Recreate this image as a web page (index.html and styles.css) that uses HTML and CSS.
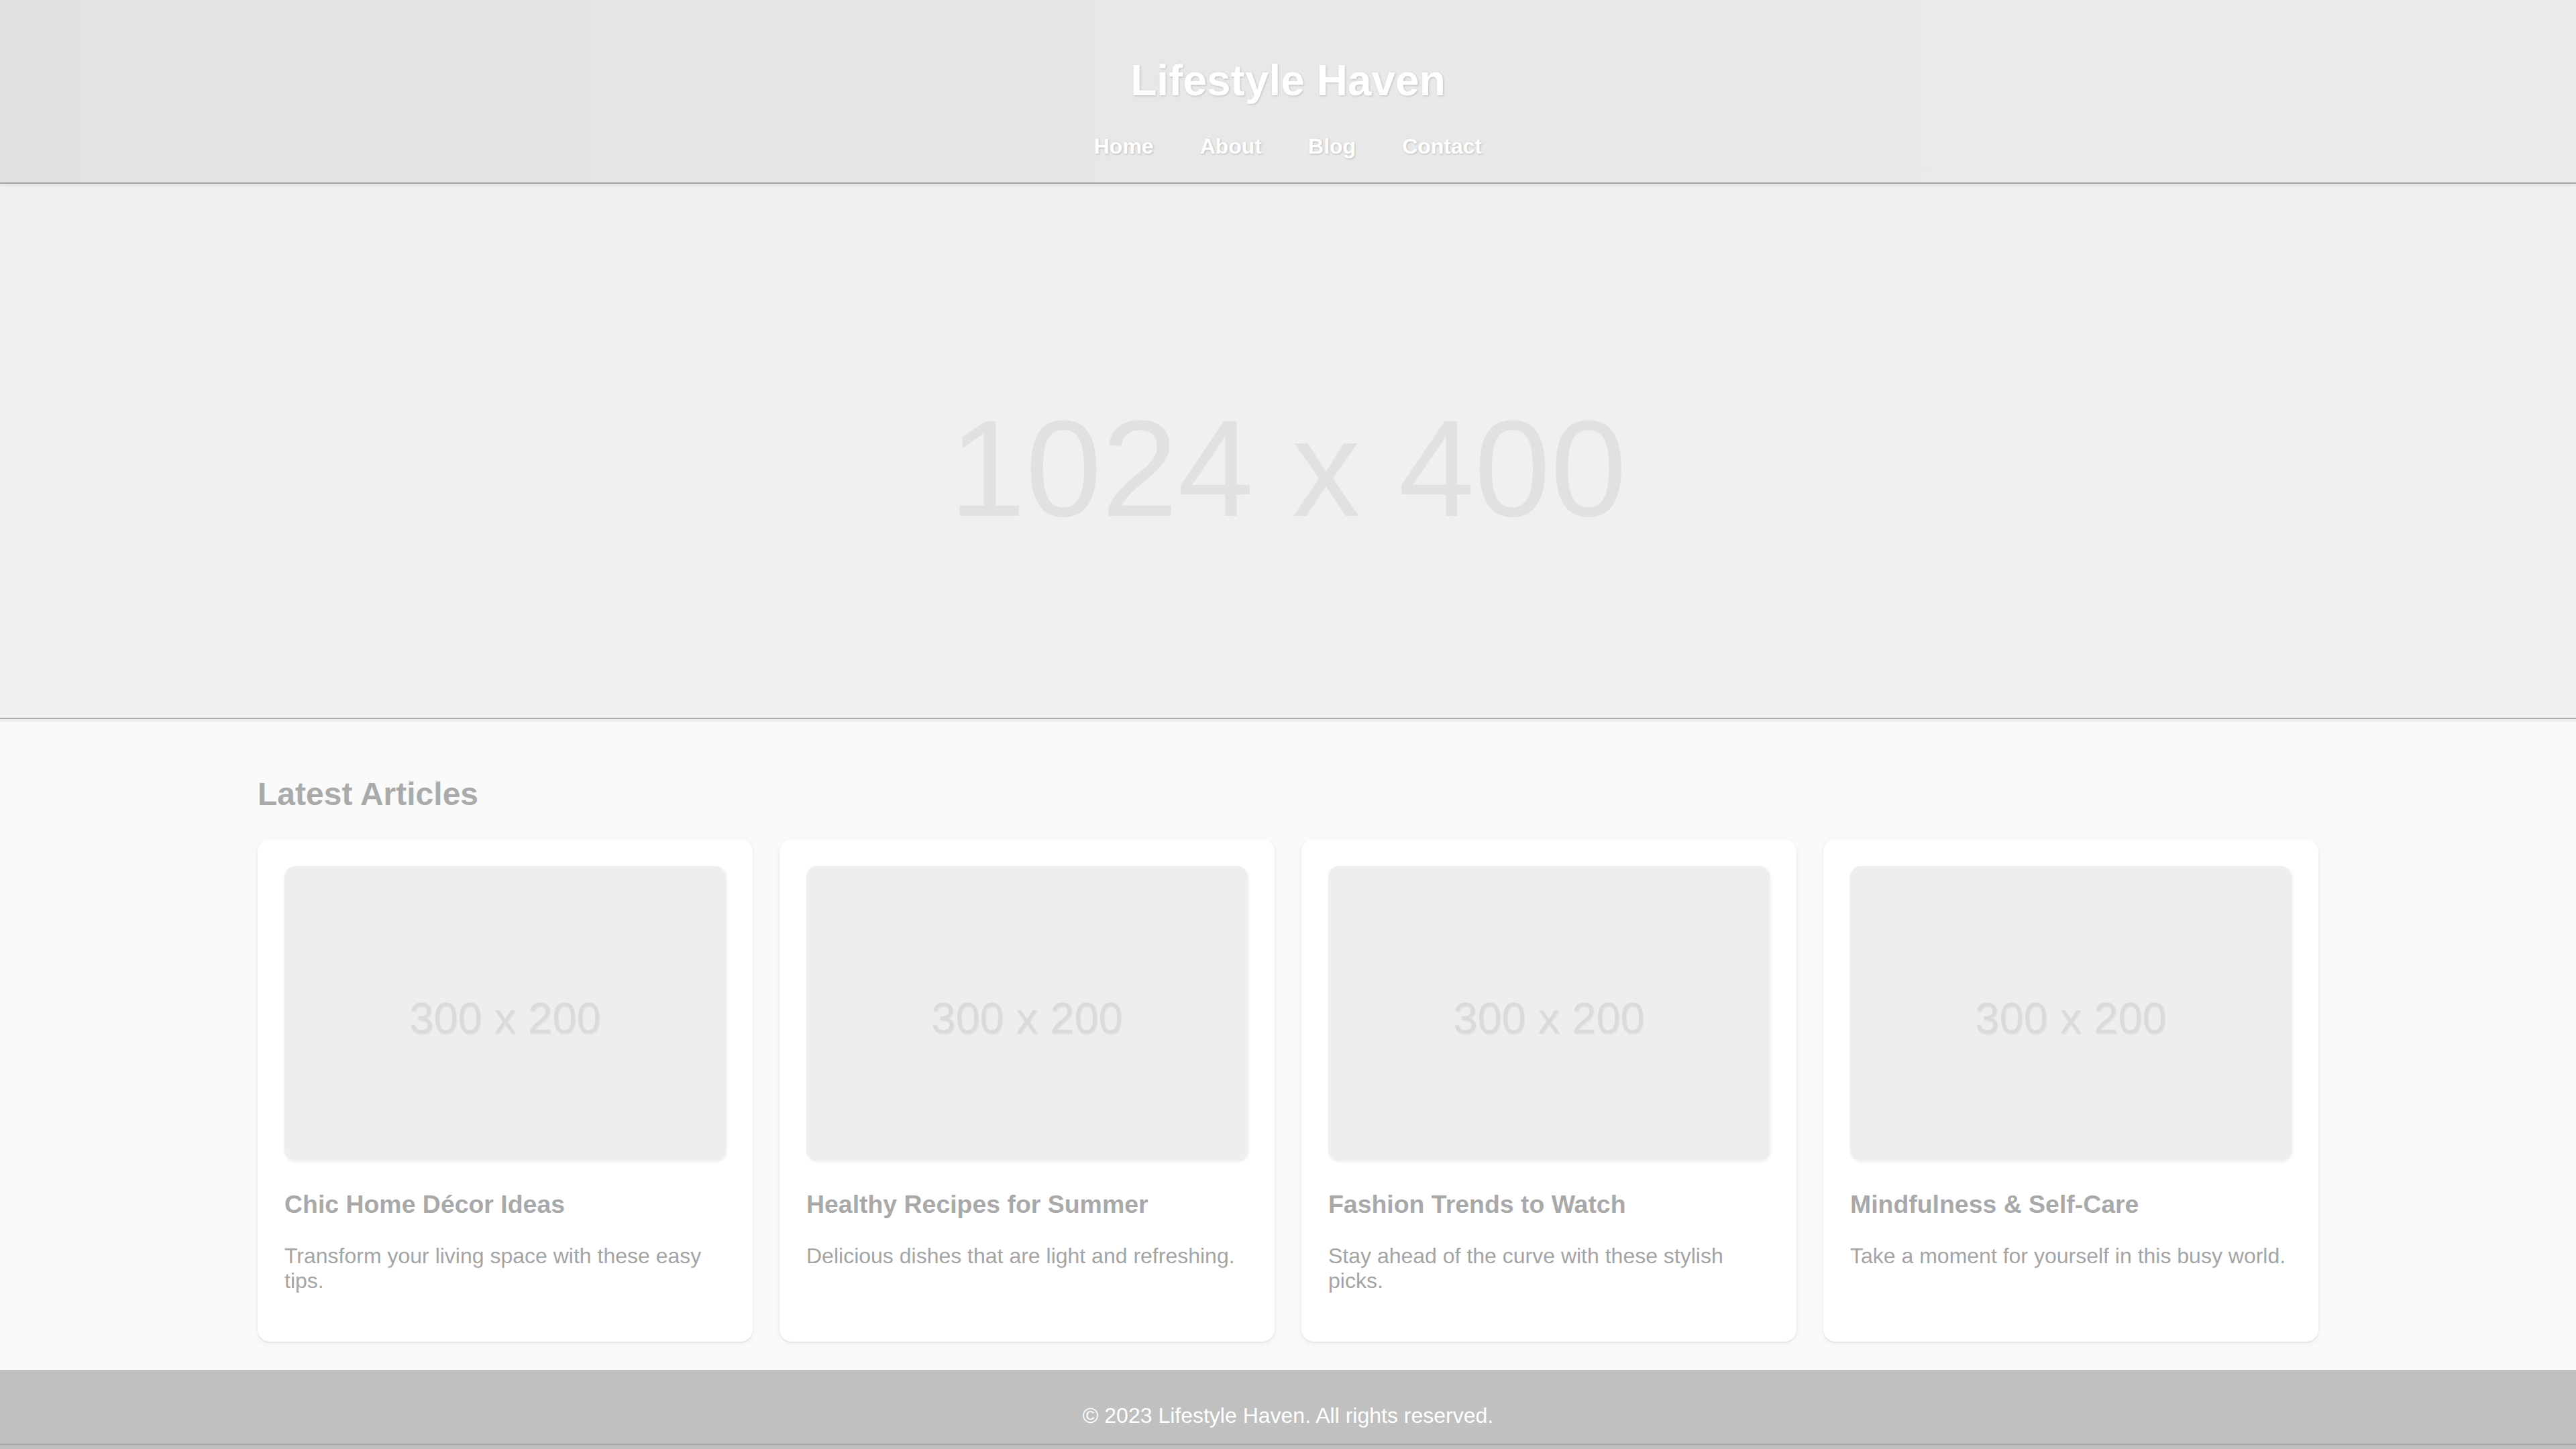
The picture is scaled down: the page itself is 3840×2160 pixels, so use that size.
FILE: index.html
```html
<!DOCTYPE html>
<html lang="en">
<head>
<meta charset="utf-8">
<title>Lifestyle Haven</title>
<link rel="stylesheet" href="styles.css">
</head>
<body>
<header class="site-header">
  <h1 class="site-title">Lifestyle Haven</h1>
  <nav class="site-nav">
    <a href="#">Home</a>
    <a href="#">About</a>
    <a href="#">Blog</a>
    <a href="#">Contact</a>
  </nav>
</header>
<section class="hero">
  <div class="hero-img"><span class="hero-label">1024 x 400</span></div>
</section>
<main class="main">
  <div class="container">
    <h2 class="section-title">Latest Articles</h2>
    <div class="card-grid">
      <article class="card">
        <div class="thumb"><span class="thumb-label">300 x 200</span></div>
        <h3 class="card-title">Chic Home Décor Ideas</h3>
        <p class="card-text">Transform your living space with these easy tips.</p>
      </article>
      <article class="card">
        <div class="thumb"><span class="thumb-label">300 x 200</span></div>
        <h3 class="card-title">Healthy Recipes for Summer</h3>
        <p class="card-text">Delicious dishes that are light and refreshing.</p>
      </article>
      <article class="card">
        <div class="thumb"><span class="thumb-label">300 x 200</span></div>
        <h3 class="card-title">Fashion Trends to Watch</h3>
        <p class="card-text">Stay ahead of the curve with these stylish picks.</p>
      </article>
      <article class="card">
        <div class="thumb"><span class="thumb-label">300 x 200</span></div>
        <h3 class="card-title">Mindfulness &amp; Self-Care</h3>
        <p class="card-text">Take a moment for yourself in this busy world.</p>
      </article>
    </div>
  </div>
</main>
<footer class="site-footer">
  <p class="footer-text">© 2023 Lifestyle Haven. All rights reserved.</p>
</footer>
</body>
</html>
```
FILE: styles.css
```css
html {
  background: #c0c0c0;
}
body {
  margin: 0;
  font-family: "Liberation Sans", Arial, sans-serif;
  font-size: 32px;
  background: #c0c0c0;
}

.site-header {
  position: relative;
  z-index: 2;
  text-align: center;
  padding: 40px 0 35px;
  background: linear-gradient(90deg, #e2e2e2 0%, #e8e8e8 50%, #ebebeb 100%);
  border-bottom: 2px solid #a2a2a2;
  box-shadow: 0 2px 5px rgba(0, 0, 0, 0.06);
}
.site-title {
  margin: 43px 0 43px;
  font-size: 64px;
  font-weight: bold;
  color: #ffffff;
  text-shadow: 1px 1px 3px rgba(0, 0, 0, 0.18);
}
.site-nav {
  display: flex;
  justify-content: center;
  gap: 69px;
}
.site-nav a {
  color: #ffffff;
  font-weight: bold;
  text-decoration: none;
  font-size: 32px;
  text-shadow: 1px 1px 3px rgba(0, 0, 0, 0.2);
}

.hero {
  background: #f0f0f0;
  padding-bottom: 4px;
}
.hero-img {
  height: 798px;
  box-sizing: border-box;
  padding-top: 52px;
  display: flex;
  align-items: center;
  justify-content: center;
  border-bottom: 2px solid #ababab;
}
.hero-label {
  font-size: 204px;
  color: #e1e1e1;
  line-height: normal;
}

.main {
  background: #fafafa;
  padding: 40px 0 42px;
}
.container {
  width: 80%;
  margin: 0 auto;
}
.section-title {
  margin: 40px 0 40px;
  font-size: 48px;
  font-weight: bold;
  color: #aaaaaa;
}
.card-grid {
  display: grid;
  grid-template-columns: repeat(4, 1fr);
  gap: 40px;
}
.card {
  background: #ffffff;
  border-radius: 18px;
  padding: 40px 40px 40px;
  box-shadow: 0 3px 10px rgba(0, 0, 0, 0.05), 0 1px 2px rgba(0, 0, 0, 0.1);
}
.thumb {
  aspect-ratio: 3 / 2;
  background: #eeeeee;
  border-radius: 16px;
  box-shadow: 1px 2px 4px rgba(0, 0, 0, 0.08);
  display: flex;
  align-items: center;
  justify-content: center;
  box-sizing: border-box;
  padding-top: 14px;
}
.thumb-label {
  font-size: 65px;
  color: #dadada;
  text-shadow: 1px 2px 2px rgba(0, 0, 0, 0.06);
}
.card-title {
  margin: 44px 0 37px;
  font-size: 37.44px;
  font-weight: bold;
  color: #a9a9a9;
}
.card-text {
  margin: 0 0 32px;
  font-size: 32px;
  color: #a4a4a4;
}

.site-footer {
  background: #c0c0c0;
  text-align: center;
  padding: 50px 0 23px;
  border-bottom: 2px solid #a6a6a6;
}
.footer-text {
  margin: 0;
  color: #ffffff;
  font-size: 32px;
}
```
